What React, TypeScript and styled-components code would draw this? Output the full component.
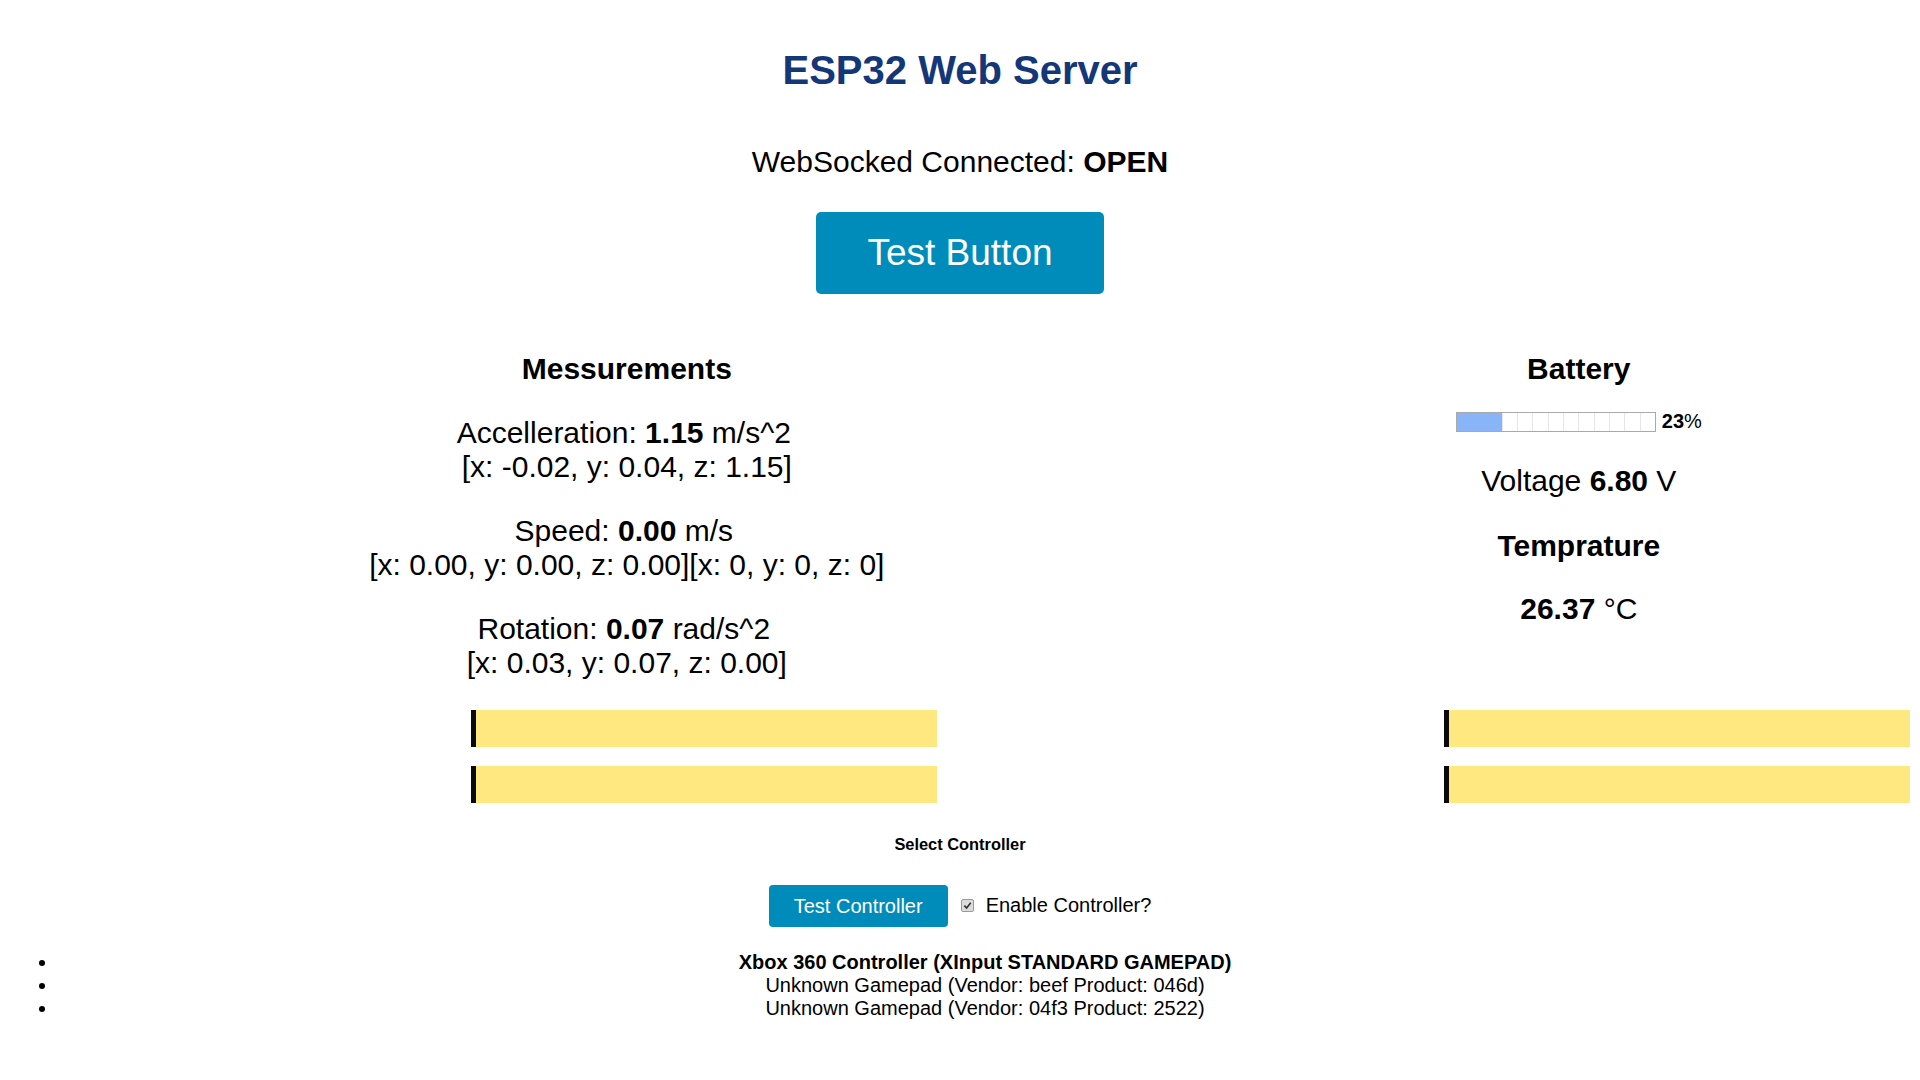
import React from "react";
import styled, { createGlobalStyle } from "styled-components";

const GlobalStyle = createGlobalStyle`
  html, body {
    margin: 0;
    padding: 0;
    background: #ffffff;
  }
  body {
    font-family: "Liberation Sans", Arial, Helvetica, sans-serif;
    color: #000000;
    text-align: center;
  }
`;

const Page = styled.div`
  padding: 47px 8px 0;
  display: flex;
  flex-direction: column;
`;

const Title = styled.h1`
  margin: 0;
  font-size: 40px;
  line-height: 46px;
  font-weight: bold;
  color: #143777;
`;

const Status = styled.p`
  margin: 52px 0 0;
  font-size: 30px;
  line-height: 34.5px;
`;

const TopAction = styled.div`
  margin-top: 32.5px;
  display: flex;
  justify-content: center;
`;

const BigButton = styled.button`
  font-family: inherit;
  font-size: 37px;
  line-height: 42px;
  color: #ffffff;
  background: #008cba;
  border: none;
  border-radius: 5px;
  padding: 20px 51px;
  cursor: pointer;
`;

const Columns = styled.div`
  margin-top: 58px;
  display: grid;
  grid-template-columns: 65% 35%;
`;

const Column = styled.section`
  display: flex;
  flex-direction: column;
  align-items: center;
`;

const Heading = styled.h2<{ $gap?: number }>`
  margin: ${(p) => p.$gap ?? 0}px 0 0;
  font-size: 30px;
  font-weight: bold;
  line-height: 34.5px;
`;

const Reading = styled.p<{ $gap?: number }>`
  margin: ${(p) => p.$gap ?? 29}px 0 0;
  font-size: 30px;
  line-height: 34.5px;
`;

const Unit = styled.span`
  padding-right: 6px;
`;

const MeterRow = styled.div`
  margin-top: 23.5px;
  display: flex;
  align-items: center;
  gap: 6px;
`;

const Meter = styled.div`
  width: 198px;
  height: 18px;
  border: 1px solid #a9a9a9;
  display: flex;
  background: #ffffff;
`;

const Cell = styled.div<{ $filled: boolean; $first: boolean }>`
  flex: 1;
  background: ${(p) => (p.$filled ? "#8ab4f8" : "transparent")};
  border-left: ${(p) => (p.$first ? "none" : p.$filled ? "1px solid #8ab4f8" : "1px solid #e6e6e6")};
`;

const Percent = styled.span`
  font-size: 20px;
  line-height: 23px;
`;

const BarsGrid = styled.div`
  margin-top: 29px;
  display: grid;
  grid-template-columns: 65% 35%;
`;

const BarStack = styled.div<{ $side: "left" | "right" }>`
  display: flex;
  flex-direction: column;
  gap: 19px;
  width: 466px;
  justify-self: ${(p) => (p.$side === "left" ? "start" : "end")};
  margin-left: ${(p) => (p.$side === "left" ? "463px" : "0")};
  margin-right: ${(p) => (p.$side === "right" ? "2px" : "0")};
`;

const Track = styled.div`
  height: 37px;
  background: #ffe880;
  display: flex;
`;

const Thumb = styled.div`
  width: 5px;
  background: #0a0a0a;
`;

const SelectLabel = styled.div`
  margin-top: 32px;
  font-size: 16.4px;
  font-weight: bold;
  line-height: 19px;
`;

const ControllerRow = styled.div`
  margin-top: 31px;
  display: flex;
  justify-content: center;
  align-items: center;
`;

const SmallButton = styled.button`
  font-family: inherit;
  font-size: 20px;
  line-height: 22px;
  color: #ffffff;
  background: #008cba;
  border: none;
  border-radius: 4px;
  padding: 10px 25px;
  cursor: pointer;
`;

const CheckLabel = styled.label`
  display: flex;
  align-items: center;
  font-size: 20px;
  margin-left: 13px;
  gap: 12px;
`;

const Check = styled.span`
  width: 11px;
  height: 11px;
  border: 1px solid #9a9a9a;
  border-radius: 2px;
  background: #dcdcdc;
  display: flex;
  align-items: center;
  justify-content: center;
`;

const GamepadList = styled.ul`
  margin: 24.5px 0 0;
  padding-left: 50px;
  font-size: 20px;
  line-height: 23px;
  list-style: disc;
`;

const GamepadItem = styled.li<{ $active?: boolean }>`
  text-align: center;
  font-weight: ${(p) => (p.$active ? "bold" : "normal")};
`;

const measurements = [
  { label: "Accelleration: ", value: "1.15", unit: " m/s^2", detail: "[x: -0.02, y: 0.04, z: 1.15]" },
  { label: "Speed: ", value: "0.00", unit: " m/s", detail: "[x: 0.00, y: 0.00, z: 0.00][x: 0, y: 0, z: 0]" },
  { label: "Rotation: ", value: "0.07", unit: " rad/s^2", detail: "[x: 0.03, y: 0.07, z: 0.00]" },
];

const gamepads = [
  { name: "Xbox 360 Controller (XInput STANDARD GAMEPAD)", active: true },
  { name: "Unknown Gamepad (Vendor: beef Product: 046d)", active: false },
  { name: "Unknown Gamepad (Vendor: 04f3 Product: 2522)", active: false },
];

const CELLS = 13;
const FILLED = 3;

export default function App() {
  return (
    <>
      <GlobalStyle />
      <Page>
        <Title>ESP32 Web Server</Title>
        <Status>
          WebSocked Connected: <b>OPEN</b>
        </Status>
        <TopAction>
          <BigButton>Test Button</BigButton>
        </TopAction>

        <Columns>
          <Column>
            <Heading>Messurements</Heading>
            {measurements.map((m) => (
              <Reading key={m.label}>
                {m.label}
                <b>{m.value}</b>
                <Unit>{m.unit}</Unit>
                <br />
                {m.detail}
              </Reading>
            ))}
          </Column>
          <Column>
            <Heading>Battery</Heading>
            <MeterRow>
              <Meter>
                {Array.from({ length: CELLS }).map((_, i) => (
                  <Cell key={i} $filled={i < FILLED} $first={i === 0} />
                ))}
              </Meter>
              <Percent>
                <b>23</b>%
              </Percent>
            </MeterRow>
            <Reading $gap={31}>
              Voltage <b>6.80</b> V
            </Reading>
            <Heading $gap={30.3}>Temprature</Heading>
            <Reading $gap={29}>
              <b>26.37</b> °C
            </Reading>
          </Column>
        </Columns>

        <BarsGrid>
          <BarStack $side="left">
            <Track>
              <Thumb />
            </Track>
            <Track>
              <Thumb />
            </Track>
          </BarStack>
          <BarStack $side="right">
            <Track>
              <Thumb />
            </Track>
            <Track>
              <Thumb />
            </Track>
          </BarStack>
        </BarsGrid>

        <SelectLabel>Select Controller</SelectLabel>
        <ControllerRow>
          <SmallButton>Test Controller</SmallButton>
          <CheckLabel>
            <Check>
              <svg width="9" height="9" viewBox="0 0 10 10">
                <path d="M1.5 5.2 L4 7.8 L8.6 2" fill="none" stroke="#333" strokeWidth="1.8" />
              </svg>
            </Check>
            Enable Controller?
          </CheckLabel>
        </ControllerRow>

        <GamepadList>
          {gamepads.map((g) => (
            <GamepadItem key={g.name} $active={g.active}>
              {g.name}
            </GamepadItem>
          ))}
        </GamepadList>
      </Page>
    </>
  );
}
